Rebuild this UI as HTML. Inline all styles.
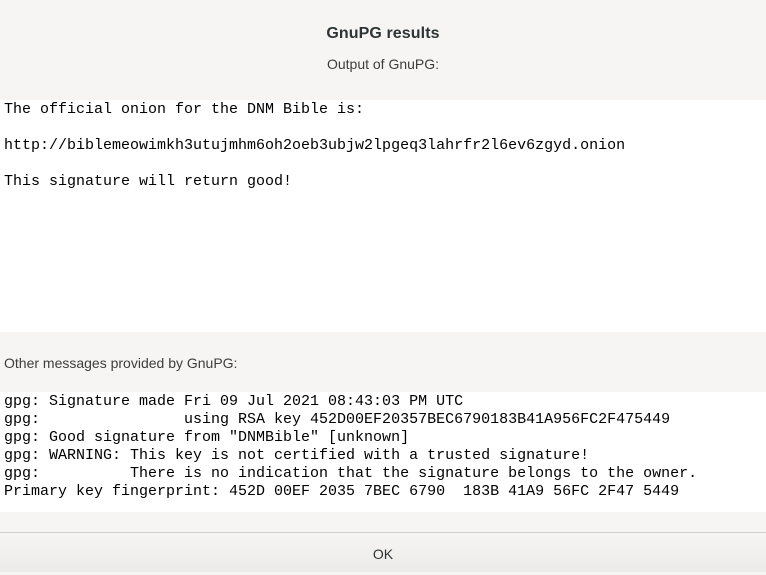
<!DOCTYPE html>
<html><head><meta charset="utf-8"><style>
*{margin:0;padding:0;box-sizing:border-box}
body{width:766px;height:572px;background:#f6f5f4;font-family:"Liberation Sans",sans-serif;color:#2e3436;position:relative;overflow:hidden}
.t{position:absolute;left:0;width:766px;text-align:center}
.box{position:absolute;left:0;width:766px;background:#fff}
pre{font-family:"Liberation Mono",monospace;font-size:15px;line-height:18px;color:#000;padding-left:4px;padding-top:1px;white-space:pre}
</style></head><body>
<div class="t" style="top:25px;font-size:16px;font-weight:bold;letter-spacing:0.1px">GnuPG results</div>
<div class="t" style="top:56px;font-size:14px;color:#3d3d3d">Output of GnuPG:</div>
<div class="box" style="top:100px;height:232px"><pre>The official onion for the DNM Bible is:

http://biblemeowimkh3utujmhm6oh2oeb3ubjw2lpgeq3lahrfr2l6ev6zgyd.onion

This signature will return good!</pre></div>
<div style="position:absolute;left:4px;top:355px;font-size:14px;color:#3d3d3d">Other messages provided by GnuPG:</div>
<div class="box" style="top:392px;height:120px"><pre>gpg: Signature made Fri 09 Jul 2021 08:43:03 PM UTC
gpg:                using RSA key 452D00EF20357BEC6790183B41A956FC2F475449
gpg: Good signature from "DNMBible" [unknown]
gpg: WARNING: This key is not certified with a trusted signature!
gpg:          There is no indication that the signature belongs to the owner.
Primary key fingerprint: 452D 00EF 2035 7BEC 6790  183B 41A9 56FC 2F47 5449</pre></div>
<div style="position:absolute;left:0;top:532px;width:766px;height:1px;background:#d0cfcc"></div>
<div style="position:absolute;left:0;top:533px;width:766px;height:39px;background:linear-gradient(#f6f5f4,#edebe9);text-align:center;line-height:42px;font-size:14px;color:#2e3436">OK</div>
</body></html>
